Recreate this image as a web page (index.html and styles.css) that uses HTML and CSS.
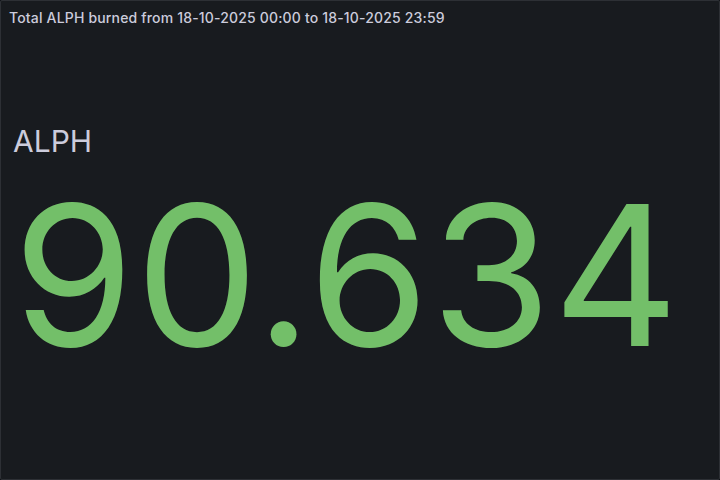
FILE: index.html
```html
<!DOCTYPE html>
<html lang="en">
<head>
    <meta charset="UTF-8">
    <title>Total ALPH burned</title>
    <link rel="stylesheet" href="styles.css">
</head>
<body>
    <div class="panel">
        <div class="panel-header">
            <h2 class="panel-title">Total ALPH burned from 18-10-2025 00:00 to 18-10-2025 23:59</h2>
        </div>
        <div class="panel-content">
            <div class="stat">
                <div class="stat-name">ALPH</div>
                <div class="stat-value">90.634</div>
            </div>
        </div>
    </div>
</body>
</html>
```

FILE: styles.css
```css
html, body {
    margin: 0;
    height: 100%;
    background-color: #111217;
}
body {
    font-family: Inter, "Noto Sans", sans-serif;
    color: #ccccdc;
}
.panel {
    box-sizing: border-box;
    height: 480px;
    width: 720px;
    background-color: #181b1f;
    border: 1px solid #2d3035;
    border-radius: 2px;
    display: flex;
    flex-direction: column;
}
.panel-header {
    height: 32px;
    padding: 0 8px;
    display: flex;
    align-items: center;
}
.panel-title {
    margin: 0;
    font-size: 14px;
    font-weight: 500;
    letter-spacing: 0.17px;
    color: #ccccdc;
}
.panel-content {
    flex: 1;
    padding: 8px 12px 25px;
    display: flex;
    align-items: center;
}
.stat {
    display: flex;
    flex-direction: column;
}
.stat-name {
    font-size: 30px;
    line-height: 1.2;
    margin-bottom: 19px;
    color: #ccccdc;
}
.stat-value {
    font-size: 195px;
    line-height: 1;
    font-weight: 400;
    letter-spacing: 1.7px;
    color: #73bf69;
}
```
